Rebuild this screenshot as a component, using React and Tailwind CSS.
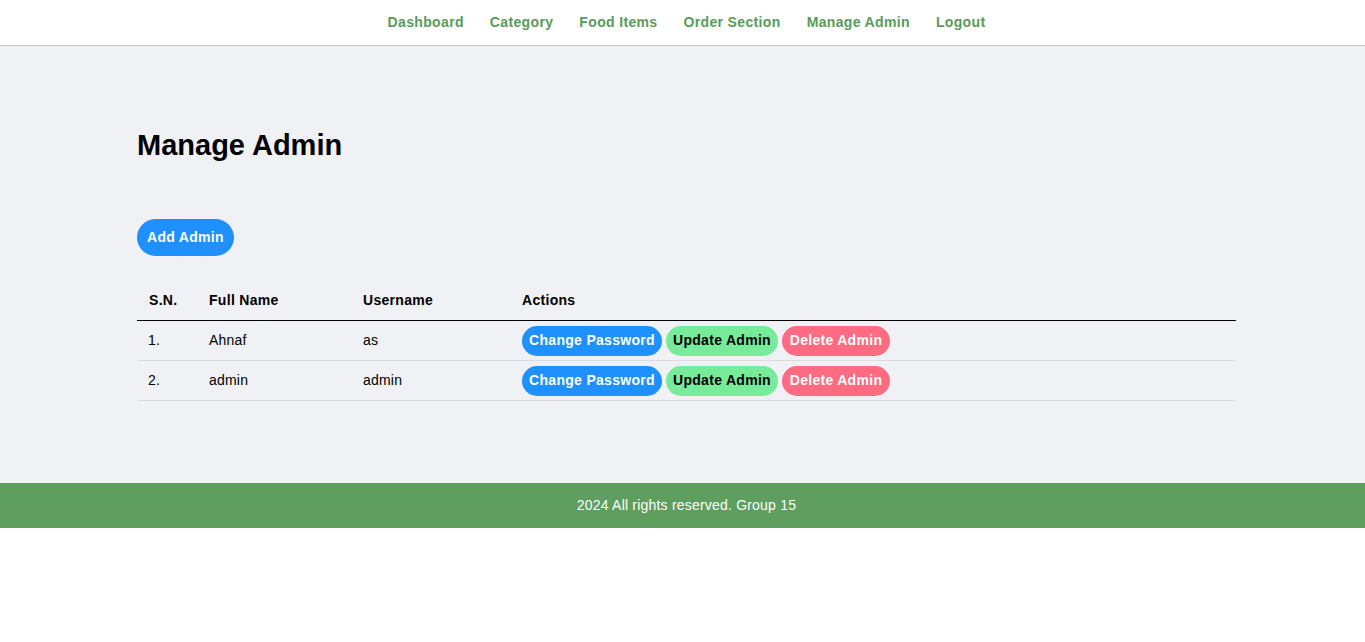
import React from 'react';

const links = ['Dashboard', 'Category', 'Food Items', 'Order Section', 'Manage Admin', 'Logout'];

const admins = [
  { id: 1, fullName: 'Ahnaf', username: 'as' },
  { id: 2, fullName: 'admin', username: 'admin' },
];

const App = () => {
  return (
    <div className="min-h-[642px] bg-white font-['Liberation_Sans',Arial,sans-serif] text-black tracking-[0.2px]">
      {/* Navbar */}
      <nav className="h-[46px] pb-[1px] pl-[8px] bg-white border-b border-[#c4c4c4] flex justify-center items-center">
        <ul className="flex gap-x-[26px]">
          {links.map((l) => (
            <li key={l}>
              <a href="#" className="text-[14px] font-bold tracking-[0.35px] text-[#5a9a5a]">
                {l}
              </a>
            </li>
          ))}
        </ul>
      </nav>

      {/* Main */}
      <main className="bg-[#f0f1f5] pt-[81px] pb-[82px]">
        <div className="ml-[137px] w-[1099px]">
          <h1 className="text-[29px] leading-[36px] font-bold tracking-normal">Manage Admin</h1>

          <button className="mt-[56px] h-[37px] w-[97px] rounded-[19px] bg-[#1e90ff] text-white text-[14px] font-bold tracking-[0.3px]">
            Add Admin
          </button>

          <div className="mt-[25px] text-[14px]">
            <div className="flex h-[40px] items-center border-b border-black font-bold tracking-[0.3px]">
              <div className="w-[60px] pl-[12px]">S.N.</div>
              <div className="w-[154px] pl-[12px]">Full Name</div>
              <div className="w-[159px] pl-[12px]">Username</div>
              <div className="pl-[12px]">Actions</div>
            </div>
            {admins.map((a) => (
              <div key={a.id} className="flex h-[40px] items-center border-b border-[#dcdcdc]">
                <div className="w-[60px] pl-[11px]">{a.id}.</div>
                <div className="w-[154px] pl-[12px]">{a.fullName}</div>
                <div className="w-[159px] pl-[12px]">{a.username}</div>
                <div className="pl-[12px] flex gap-x-[4px] font-bold tracking-[0.3px]">
                  <button className="h-[30px] w-[140px] rounded-[15px] bg-[#1e90ff] text-white font-bold">
                    Change Password
                  </button>
                  <button className="h-[30px] w-[112px] rounded-[15px] bg-[#77eb9a] text-black font-bold">
                    Update Admin
                  </button>
                  <button className="h-[30px] w-[108px] rounded-[15px] bg-[#ff6b81] text-white font-bold">
                    Delete Admin
                  </button>
                </div>
              </div>
            ))}
          </div>
        </div>
      </main>

      {/* Footer */}
      <footer className="h-[45px] pl-[8px] bg-[#5e9e5f] flex items-center justify-center">
        <p className="text-white text-[14px]">2024 All rights reserved. Group 15</p>
      </footer>
    </div>
  );
};

export default App;
